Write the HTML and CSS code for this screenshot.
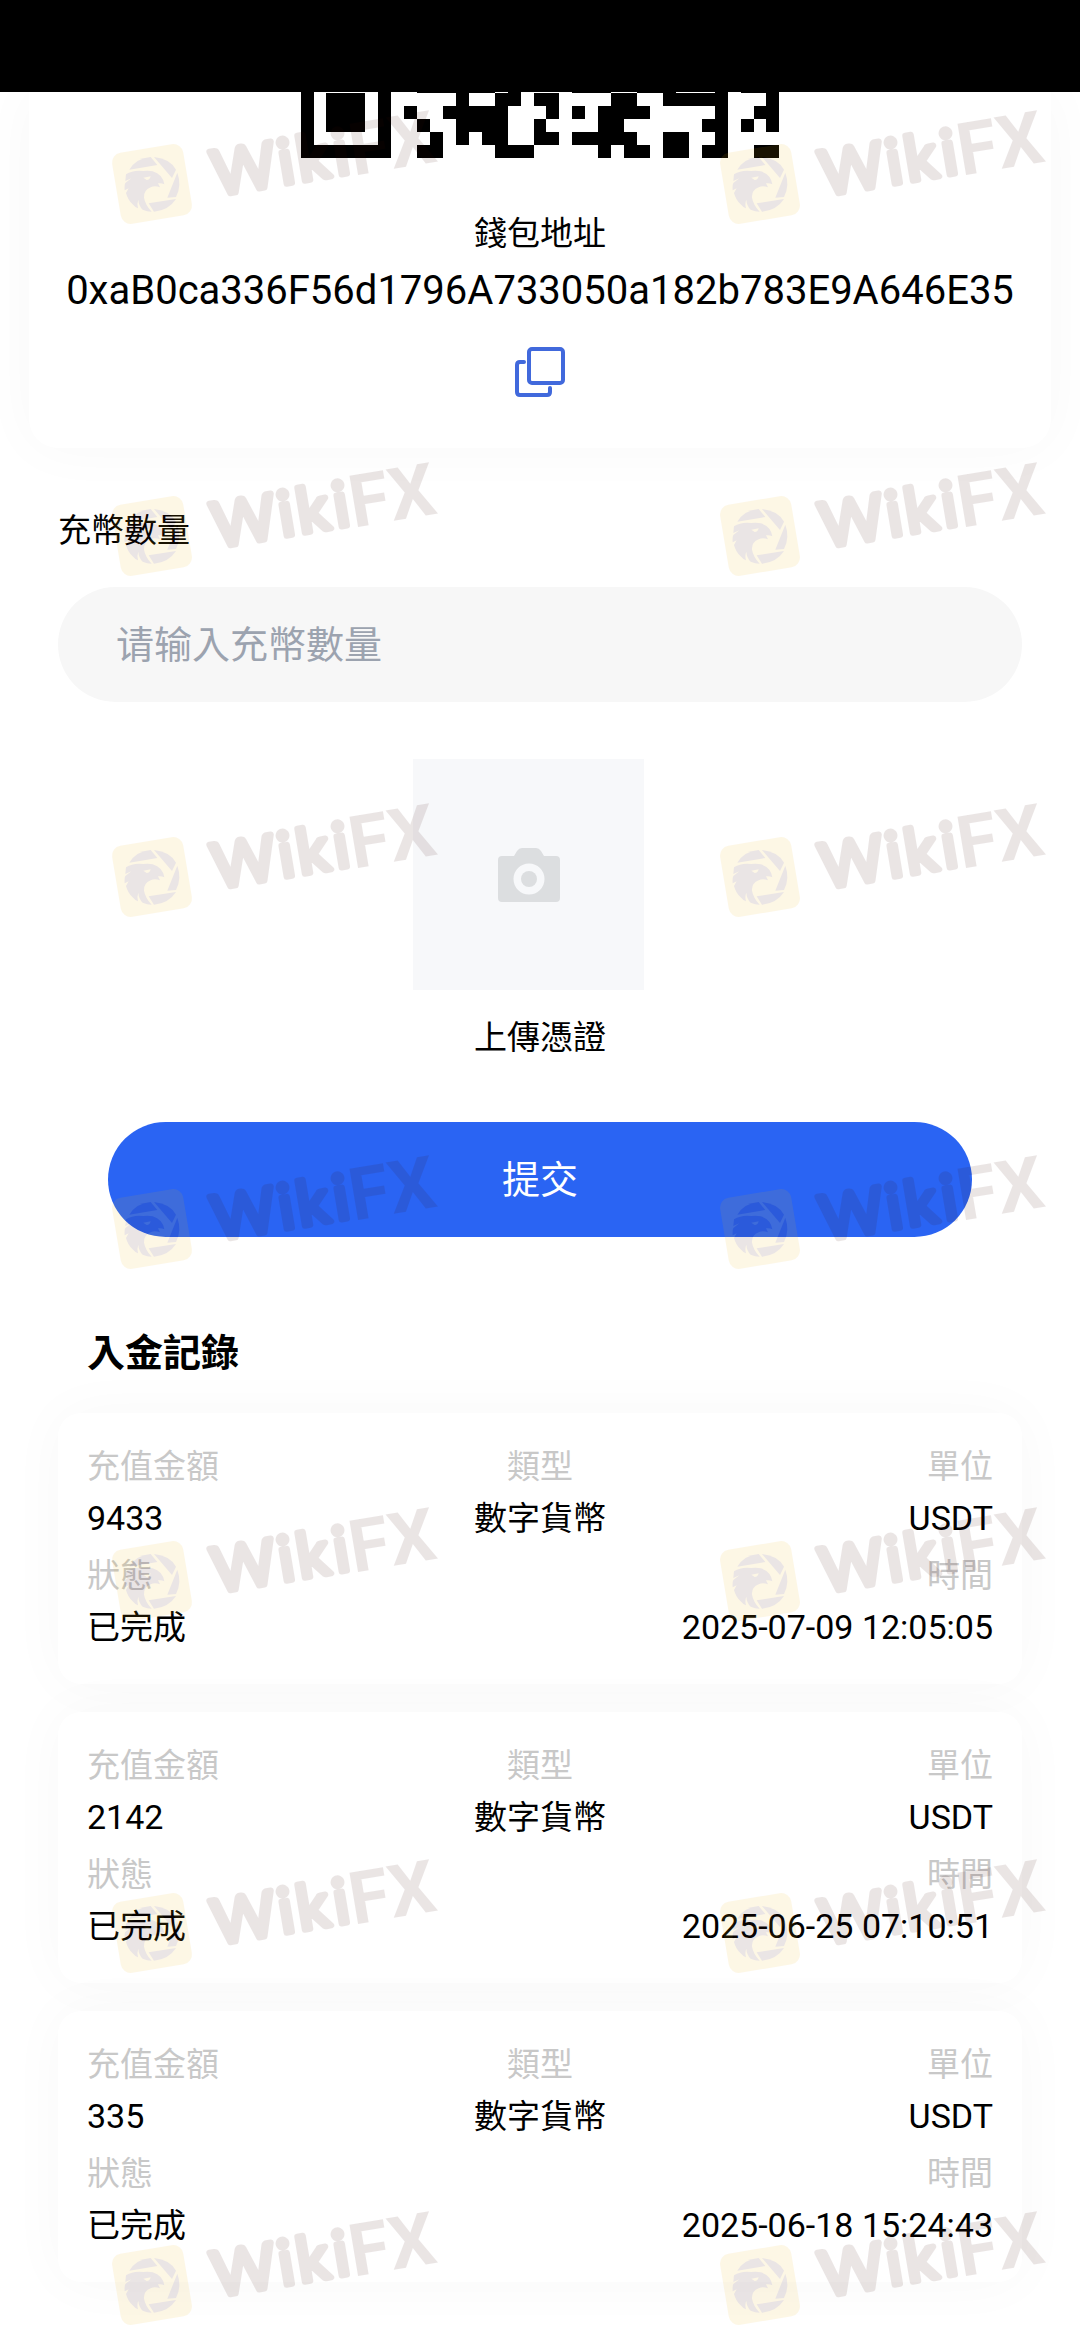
FILE: index.html
```html
<!DOCTYPE html>
<html lang="zh-Hant">
<head>
<meta charset="utf-8">
<meta name="viewport" content="width=device-width, initial-scale=1">
<title>充幣</title>
<link rel="stylesheet" href="styles.css">
</head>
<body>
<header class="status-bar"></header>

<main class="page">
  <section class="wallet">
    <svg class="qr" viewBox="0 0 37 5.1" role="img" aria-label="QR" shape-rendering="crispEdges">
      <path d="M0 0h1v.1h-1zM6 0h1v.1h-1zM9 0h6v.1h-6zM16 0h1v.1h-1zM21 0h3v.1h-3zM26 0h3v.1h-3zM32 0h1v.1h-1zM34 0h3v.1h-3z"/>
      <path transform="translate(0 .1)" d="M0 0h1v4h6v1H0zM6 0h1v4H6zM2 0h3v3H2zM12 0h1v1h-1zM15 0h2v1h-2zM18 0h2v1h-2zM24 0h2v1h-2zM28 0h5v1h-5zM36 0h1v1h-1z
        M8 1h1v1H8zM11 1h5v1h-5zM19 1h1v1h-1zM21 1h1v1h-1zM23 1h4v1h-4zM32 1h1v1h-1zM35 1h2v1h-2z
        M9 2h1v1H9zM12 2h4v1h-4zM18 2h1v1h-1zM23 2h2v1h-2zM31 2h2v1h-2zM34 2h1v1h-1zM36 2h1v1h-1z
        M10 3h1v1h-1zM12 3h1v1h-1zM14 3h2v1h-2zM18 3h2v1h-2zM21 3h5v1h-5zM28 3h2v1h-2zM32 3h1v1h-1z
        M9 4h2v1H9zM15 4h3v1h-3zM23 4h1v1h-1zM25 4h2v1h-2zM28 4h2v1h-2zM31 4h2v1h-2zM35 4h2v1h-2z"/>
    </svg>
    <h2 class="wallet-label">錢包地址</h2>
    <p class="wallet-address">0xaB0ca336F56d1796A733050a182b783E9A646E35</p>
    <button class="copy" type="button" aria-label="複製">
      <svg viewBox="0 0 52 52" fill="none" stroke="#4169dc" stroke-width="4" stroke-linecap="round">
        <rect x="15" y="3" width="34" height="34" rx="3"/>
        <path d="M10 16H6q-3 0-3 3v27q0 3 3 3h27q3 0 3-3v-4"/>
      </svg>
    </button>
  </section>

  <form class="deposit">
    <label class="field-label" for="amount">充幣數量</label>
    <input class="field" id="amount" type="text" placeholder="请输入充幣數量">
    <div class="upload">
      <label class="upload-box" for="proof">
        <svg viewBox="0 0 62 54">
          <path fill="#dcdee0" fill-rule="evenodd" d="M4 8H16L19 3Q21 0 24 0H38Q41 0 43 3L46 8H58Q62 8 62 12V50Q62 54 58 54H4Q0 54 0 50V12Q0 8 4 8ZM31 15.500a15.500 15.500 0 1 0 0 31a15.500 15.500 0 1 0 0-31Z"/>
          <circle cx="31" cy="31" r="8" fill="#dcdee0"/>
        </svg>
      </label>
      <input class="upload-input" id="proof" type="file" aria-label="上傳憑證">
      <p class="upload-text">上傳憑證</p>
    </div>
    <button class="submit" type="submit">提交</button>
  </form>

  <section class="history">
    <h2 class="history-title">入金記錄</h2>
    <ul class="records">
      <li class="record">
        <dl class="row"><div><dt>充值金額</dt><dd>9433</dd></div><div><dt>類型</dt><dd class="han">數字貨幣</dd></div><div><dt>單位</dt><dd>USDT</dd></div></dl>
        <dl class="row"><div><dt>狀態</dt><dd class="han">已完成</dd></div><div><dt>時間</dt><dd>2025-07-09 12:05:05</dd></div></dl>
      </li>
      <li class="record">
        <dl class="row"><div><dt>充值金額</dt><dd>2142</dd></div><div><dt>類型</dt><dd class="han">數字貨幣</dd></div><div><dt>單位</dt><dd>USDT</dd></div></dl>
        <dl class="row"><div><dt>狀態</dt><dd class="han">已完成</dd></div><div><dt>時間</dt><dd>2025-06-25 07:10:51</dd></div></dl>
      </li>
      <li class="record">
        <dl class="row"><div><dt>充值金額</dt><dd>335</dd></div><div><dt>類型</dt><dd class="han">數字貨幣</dd></div><div><dt>單位</dt><dd>USDT</dd></div></dl>
        <dl class="row"><div><dt>狀態</dt><dd class="han">已完成</dd></div><div><dt>時間</dt><dd>2025-06-18 15:24:43</dd></div></dl>
      </li>
    </ul>
  </section>
</main>

<div class="watermarks" aria-hidden="true">
  <svg>
    <g id="brand-mark" opacity="0.1">
      <g transform="translate(52 97) rotate(-9.5)">
        <rect x="-36" y="-36" width="72" height="72" rx="10" fill="#f0b410"/>
        <text class="mark-text" x="61 128 147 184" y="22">Wiki<tspan class="mark-bold" x="200" y="25">FX</tspan></text>
      </g>
      <g transform="scale(0.3333)" fill="#3c0a10">
        <path d="M88 248Q108 214 152 210L172 234Z"/>
        <path d="M162 210Q210 215 228 248L216 273Z"/>
        <path d="M232 257Q246 296 228 330L202 332Z"/>
        <path d="M146 349L228 336Q206 370 162 374Z"/>
        <path d="M78 262Q100 248 130 252Q146 250 158 253Q188 262 193 292Q184 287 174 289L180 301Q164 295 152 301Q130 310 132 332Q136 354 155 374Q142 374 128 368Q116 356 115 338Q110 350 114 364Q104 360 98 352Q84 340 78 318L86 304L74 310Q73 292 76 288L94 274L76 282Z"/>
        <path d="M130 272L152 268Q150 279 140 279Z" fill="#f0b410"/>
      </g>
    </g>
  </svg>
  <svg><use href="#brand-mark"/></svg>
  <svg><use href="#brand-mark"/></svg><svg><use href="#brand-mark"/></svg>
  <svg><use href="#brand-mark"/></svg><svg><use href="#brand-mark"/></svg>
  <svg><use href="#brand-mark"/></svg><svg><use href="#brand-mark"/></svg>
  <svg><use href="#brand-mark"/></svg><svg><use href="#brand-mark"/></svg>
  <svg><use href="#brand-mark"/></svg><svg><use href="#brand-mark"/></svg>
  <svg><use href="#brand-mark"/></svg><svg><use href="#brand-mark"/></svg>
</div>
</body>
</html>
```
FILE: styles.css
```css
* {
  box-sizing: border-box;
}

body {
  position: relative;
  margin: 0;
  overflow-x: hidden;
  background: #fff;
  color: #000;
  font-family: Roboto, "Noto Sans CJK TC", "Noto Sans CJK SC", sans-serif;
  font-size: 33px;
  line-height: 52px;
}

h2, p, ul, dl, dd {
  margin: 0;
  padding: 0;
}

h2 {
  font-size: inherit;
  font-weight: 400;
}

button, input {
  border: 0;
  font: inherit;
}

.status-bar {
  position: relative;
  z-index: 1;
  height: 92px;
  background: #000;
}

.wallet {
  display: flex;
  flex-direction: column;
  align-items: center;
  margin: 0 29px;
  padding-bottom: 50px;
  border-radius: 0 0 29px 29px;
  background: #fff;
  box-shadow: 0 0 58px rgba(0, 0, 0, 0.03);
}

.qr {
  display: block;
  width: 480px;
  height: 66px;
}

.wallet-label {
  margin-top: 50px;
}

.wallet-address {
  margin-top: 5px;
  font-size: 40px;
}

.copy {
  width: 52px;
  height: 52px;
  margin-top: 29px;
  padding: 0;
  background: none;
}

.copy svg {
  display: block;
}

.deposit {
  display: flex;
  flex-direction: column;
  padding: 57px 58px 0;
}

.field-label {
  align-self: flex-start;
}

.field {
  width: 100%;
  height: 115px;
  margin-top: 30px;
  padding: 0 58px;
  border-radius: 58px;
  background: #f7f7f7;
  font-size: 38px;
}

.field::placeholder {
  color: #9ca3af;
}

.upload {
  display: flex;
  flex-direction: column;
  align-items: center;
  margin-top: 57px;
}

.upload-box {
  display: grid;
  place-items: center;
  width: 231px;
  height: 231px;
  margin-right: 23px;
  background: #f7f8fa;
}

.upload-box svg {
  width: 62px;
  height: 54px;
}

.upload-input {
  position: absolute;
  width: 1px;
  height: 1px;
  opacity: 0;
}

.upload-text {
  margin-top: 22px;
}

.submit {
  height: 115px;
  margin: 58px 50px 0;
  border-radius: 58px;
  background: #2a64f3;
  color: #fff;
  font-size: 38px;
}

.history {
  padding: 90px 58px 58px;
}

.history-title {
  margin-left: 29px;
  font-size: 38px;
  font-weight: 700;
}

.records {
  display: flex;
  flex-direction: column;
  gap: 28px;
  margin-top: 34px;
  list-style: none;
}

.record {
  padding: 28px 29px 31px;
  border-radius: 23px;
  background: #fff;
  box-shadow: 0 0 58px rgba(0, 0, 0, 0.03);
}

.row {
  display: flex;
}

.row + .row {
  margin-top: 6px;
}

.row > div {
  flex: 1;
  text-align: center;
}

.row > div:first-child {
  text-align: left;
}

.row > div:last-child {
  text-align: right;
}

dt {
  color: #c8c8c8;
}

dd {
  font-size: 34px;
  line-height: 51px;
}

.han {
  font-size: 33px;
}

/* Brand pattern laid over the whole page */
.watermarks {
  position: absolute;
  inset: 0;
  z-index: 2;
  display: grid;
  grid-template-columns: 608px 345px;
  grid-template-rows: 352px 341px;
  grid-auto-rows: 352px;
  padding: 87px 0 0 100px;
  overflow: hidden;
  pointer-events: none;
}

.watermarks svg {
  width: 345px;
  height: 150px;
}

.mark-text {
  font-family: Lato, sans-serif;
  font-size: 62px;
  fill: #3c0a05;
  stroke: #3c0a05;
  stroke-width: 6px;
  stroke-linejoin: round;
}

.mark-bold {
  font-family: Roboto, sans-serif;
  font-size: 73px;
  font-weight: 700;
  stroke: none;
}
```
